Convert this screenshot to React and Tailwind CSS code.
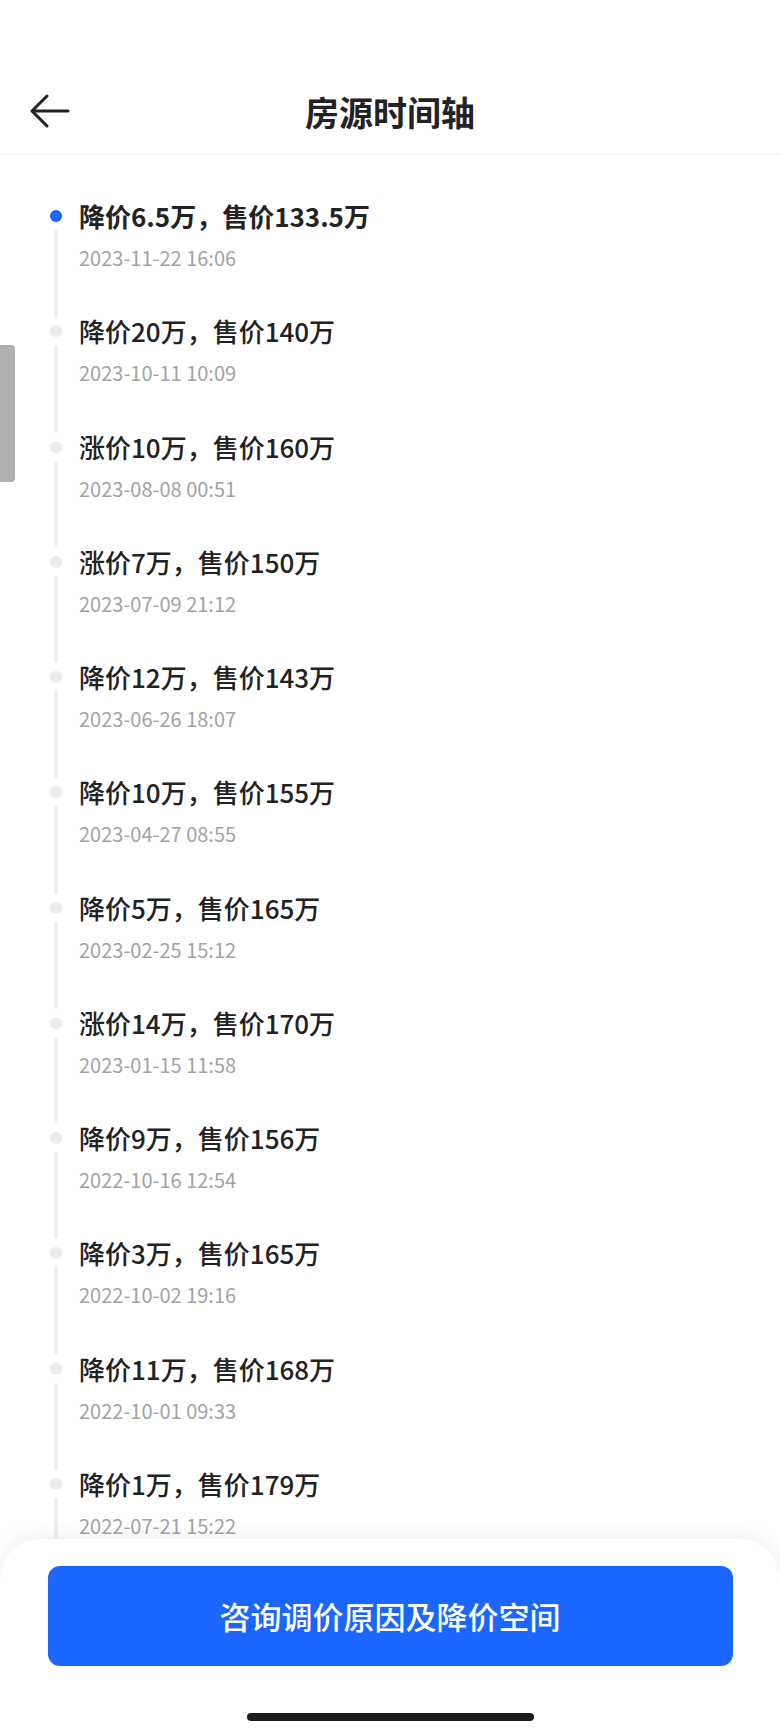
const events = [
  { title: '降价6.5万，售价133.5万', time: '2023-11-22 16:06' },
  { title: '降价20万，售价140万', time: '2023-10-11 10:09' },
  { title: '涨价10万，售价160万', time: '2023-08-08 00:51' },
  { title: '涨价7万，售价150万', time: '2023-07-09 21:12' },
  { title: '降价12万，售价143万', time: '2023-06-26 18:07' },
  { title: '降价10万，售价155万', time: '2023-04-27 08:55' },
  { title: '降价5万，售价165万', time: '2023-02-25 15:12' },
  { title: '涨价14万，售价170万', time: '2023-01-15 11:58' },
  { title: '降价9万，售价156万', time: '2022-10-16 12:54' },
  { title: '降价3万，售价165万', time: '2022-10-02 19:16' },
  { title: '降价11万，售价168万', time: '2022-10-01 09:33' },
  { title: '降价1万，售价179万', time: '2022-07-21 15:22' },
];

const TimelineItem = ({ item, active }) => {
  return (
    <div className="flex h-[115.25px] gap-[17px]">
      <div className="flex w-[12px] flex-col items-center">
        <div
          className={`mt-[12px] h-[12px] w-[12px] shrink-0 rounded-full ${
            active ? 'bg-[#1b66ff]' : 'bg-[#ececec]'
          }`}
        />
        <div className="mt-[8px] mb-[-4px] w-[4px] flex-1 rounded-full bg-[#efefef]" />
      </div>
      <div>
        <div
          className={`text-[26px] leading-[36px] text-[#222] ${
            active ? 'font-bold' : 'font-medium'
          }`}
        >
          {item.title}
        </div>
        <div className="mt-[10px] text-[20px] leading-[28px] text-[#a3a3a3]">
          {item.time}
        </div>
      </div>
    </div>
  );
};

export default function App() {
  return (
    <div
      className="relative h-[1733px] w-[780px] overflow-hidden bg-white"
      style={{ fontFamily: '"Noto Sans CJK SC", "Noto Sans", sans-serif' }}
    >
      {/* header */}
      <div className="h-[155px] border-b border-[#f3f3f3] pt-[71px]">
        <div className="grid h-[80px] grid-cols-[1fr_auto_1fr] items-center">
          <div className="pl-[30px]">
            <svg width="40" height="34" viewBox="0 0 40 34" fill="none">
              <path
                d="M38 17H2M17 2L2 17L17 32"
                stroke="#222"
                strokeWidth="3"
                strokeLinecap="round"
                strokeLinejoin="round"
              />
            </svg>
          </div>
          <h1 className="text-[34px] font-bold text-[#222]">房源时间轴</h1>
          <div />
        </div>
      </div>

      {/* timeline */}
      <div className="pt-[43px] pl-[50px]">
        {events.map((e, i) => (
          <TimelineItem key={e.time} item={e} active={i === 0} />
        ))}
      </div>

      {/* scroll indicator */}
      <div className="absolute top-[345px] left-0 h-[137px] w-[15px] rounded-r-[4px] bg-[#b0b0b0]" />

      {/* bottom bar */}
      <div className="absolute right-0 bottom-0 left-0 flex h-[194px] flex-col items-center rounded-t-[40px] bg-white shadow-[0_-6px_18px_rgba(0,0,0,0.05)]">
        <button className="mt-[27px] flex h-[100px] w-[685px] items-center justify-center rounded-[12px] bg-[#1b66ff] text-[31px] font-medium text-white">
          咨询调价原因及降价空间
        </button>
        <div className="mt-[47px] h-[8px] w-[287px] rounded-full bg-[#1c1c1c]" />
      </div>
    </div>
  );
}
